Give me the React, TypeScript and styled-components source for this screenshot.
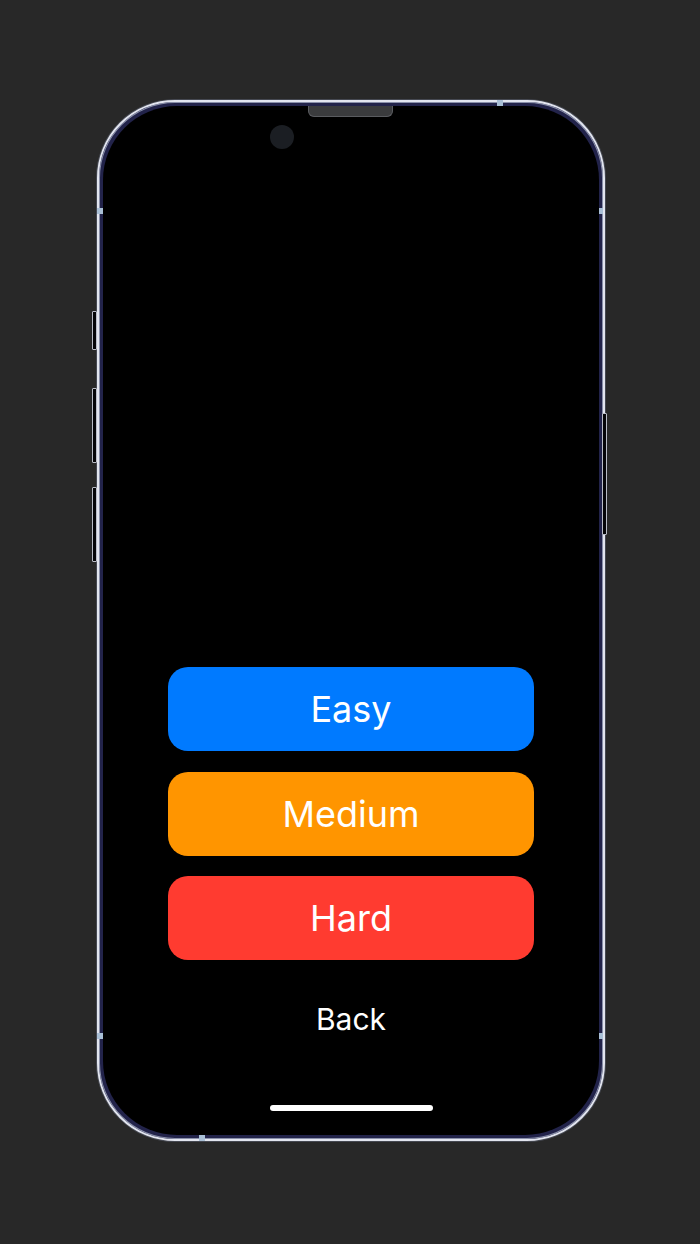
import React from "react";
import styled, { createGlobalStyle } from "styled-components";

// Difficulty picker shown inside a phone mockup.

const GlobalStyle = createGlobalStyle`
  html, body {
    margin: 0;
    padding: 0;
    background: #282828;
  }
  body {
    font-family: Inter, "Noto Sans", "Liberation Sans", sans-serif;
    -webkit-font-smoothing: antialiased;
  }
`;

const Stage = styled.div`
  width: 700px;
  height: 1244px;
  display: flex;
  justify-content: center;
  padding: 100px 0 0 2px;
  box-sizing: border-box;
`;

const Phone = styled.div`
  position: relative;
  width: 508px;
  height: 1041px;
  box-sizing: border-box;
  border: 2px solid #e2e5ef;
  border-radius: 78px;
  padding: 4px;
  background: #22234a;
  box-shadow: 0 0 0 1px rgba(140, 150, 180, 0.3), inset 0 0 0 1px #8a90aa;
`;

const SideButton = styled.div<{ $side: "left" | "right"; $top: number; $h: number }>`
  position: absolute;
  ${(p) => (p.$side === "left" ? "left: -7px;" : "right: -4px;")}
  top: ${(p) => p.$top}px;
  width: 3px;
  height: ${(p) => p.$h}px;
  border: 1px solid #b9bcc6;
  background: #050508;
  border-radius: 1px;
`;

// antenna bands crossing the frame
const Band = styled.div<{ $x: number; $y: number }>`
  position: absolute;
  left: ${(p) => p.$x}px;
  top: ${(p) => p.$y}px;
  width: 6px;
  height: 6px;
  background: #a9bfd6;
`;

const Screen = styled.div`
  position: relative;
  height: 100%;
  background: #000;
  border-radius: 74px;
  display: flex;
  flex-direction: column;
  align-items: center;
  padding-bottom: 24px;
  box-sizing: border-box;
  overflow: hidden;
`;

const Speaker = styled.div`
  position: absolute;
  top: -1px;
  left: 205px;
  width: 85px;
  height: 12px;
  border-radius: 0 0 6px 6px;
  background: #3a3b3d;
  border: 1px solid #5a5c60;
  border-top: none;
  box-sizing: border-box;
`;

const Camera = styled.div`
  position: absolute;
  top: 19px;
  left: 167px;
  width: 24px;
  height: 24px;
  border-radius: 50%;
  background: #1b1e23;
`;

const Spacer = styled.div`
  flex: 1;
`;

const Options = styled.div`
  display: flex;
  flex-direction: column;
  gap: 20.5px;
`;

const Choice = styled.button<{ $bg: string }>`
  width: 366px;
  height: 84px;
  border: none;
  border-radius: 20px;
  background: ${(p) => p.$bg};
  color: #fff;
  font-family: inherit;
  font-size: 36px;
  font-weight: 400;
  cursor: pointer;
  padding: 0;
`;

const BackButton = styled.button`
  margin-top: 41px;
  height: 36px;
  line-height: 36px;
  padding: 0;
  border: none;
  background: none;
  color: #fff;
  font-family: inherit;
  font-size: 30px;
  cursor: pointer;
`;

const HomeIndicator = styled.div`
  margin-top: 68px;
  width: 163px;
  height: 6px;
  border-radius: 3px;
  background: #fff;
`;

const LEVELS = [
  { label: "Easy", color: "#007aff" },
  { label: "Medium", color: "#ff9500" },
  { label: "Hard", color: "#ff3b30" },
];

const BANDS = [
  { x: 398, y: -2 },
  { x: -2, y: 106 },
  { x: 498, y: 106 },
  { x: -2, y: 931 },
  { x: 498, y: 931 },
  { x: 100, y: 1033 },
];

export default function App() {
  return (
    <>
      <GlobalStyle />
      <Stage>
        <Phone>
          <SideButton $side="left" $top={209} $h={37} />
          <SideButton $side="left" $top={286} $h={73} />
          <SideButton $side="left" $top={385} $h={73} />
          <SideButton $side="right" $top={311} $h={120} />

          {BANDS.map((b, i) => (
            <Band key={i} $x={b.x} $y={b.y} />
          ))}

          <Screen>
            <Speaker />
            <Camera />
            <Spacer />
            <Options>
              {LEVELS.map((l) => (
                <Choice key={l.label} $bg={l.color}>
                  {l.label}
                </Choice>
              ))}
            </Options>
            <BackButton>Back</BackButton>
            <HomeIndicator />
          </Screen>
        </Phone>
      </Stage>
    </>
  );
}
